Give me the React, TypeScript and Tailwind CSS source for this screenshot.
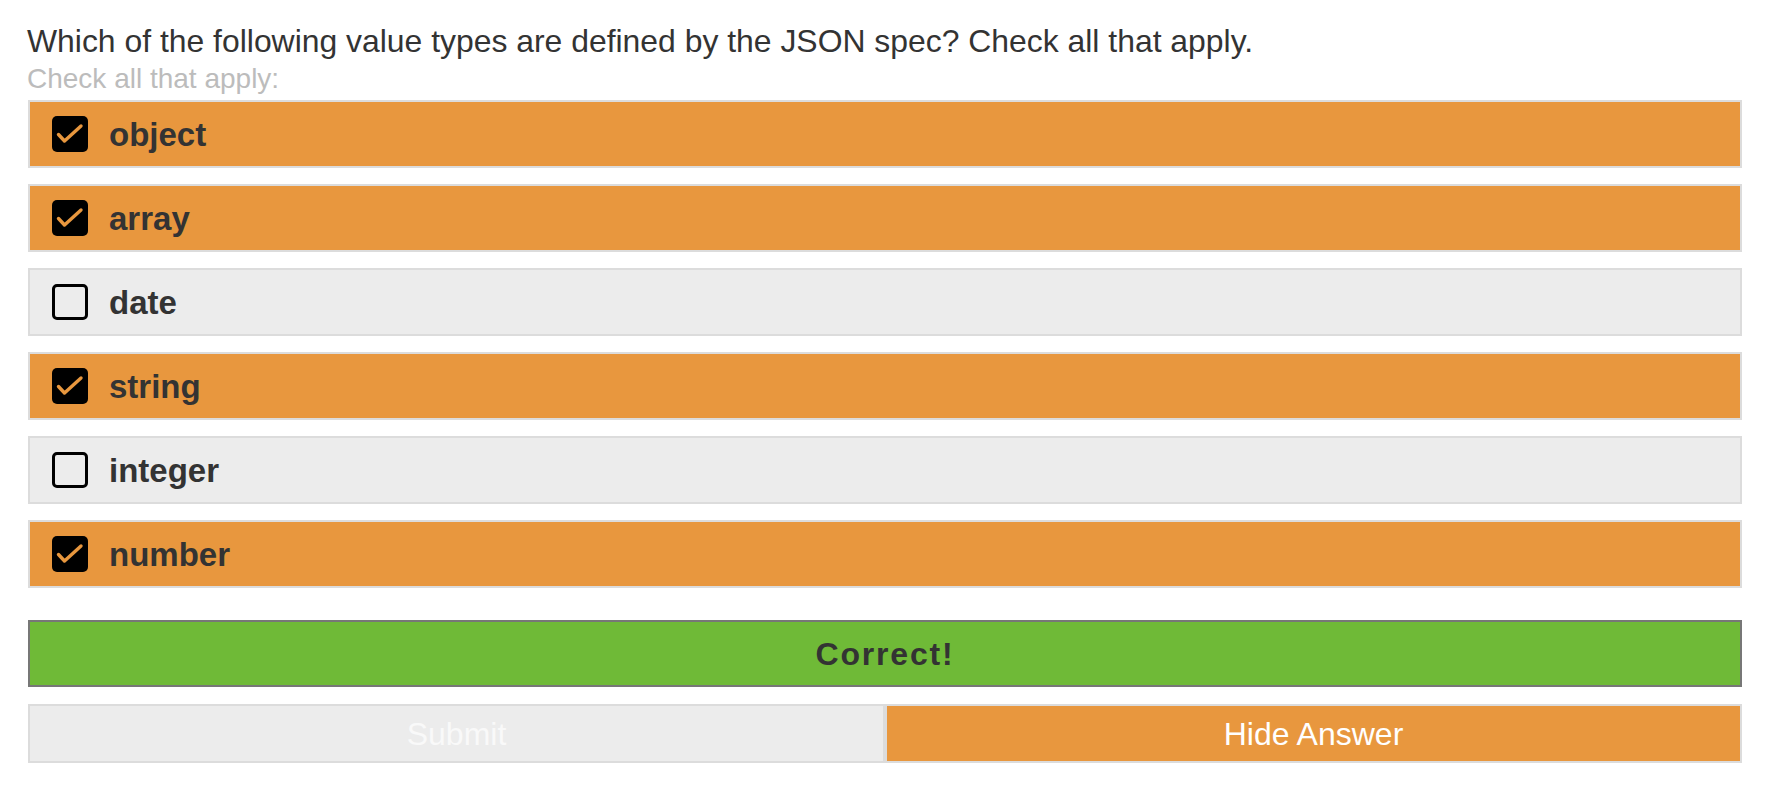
import React from "react";

const options = [
  { label: "object", checked: true },
  { label: "array", checked: true },
  { label: "date", checked: false },
  { label: "string", checked: true },
  { label: "integer", checked: false },
  { label: "number", checked: true },
];

function Box({ checked }: { checked: boolean }) {
  if (checked) {
    return (
      <div className="w-[36px] h-[36px] rounded-[5px] bg-black flex-none">
        <svg width="36" height="36" viewBox="0 0 36 36">
          <path
            d="M6.5 18.5 L12.5 25 L29 10"
            fill="none"
            stroke="#e8973e"
            strokeWidth="3.4"
            strokeLinecap="round"
            strokeLinejoin="round"
          />
        </svg>
      </div>
    );
  }
  return <div className="w-[36px] h-[36px] rounded-[5px] border-[3px] border-black flex-none" />;
}

export default function App() {
  return (
    <div
      className="bg-white w-[1792px] min-h-[792px] pt-[23px]"
      style={{ fontFamily: '"Liberation Sans", Arial, Helvetica, sans-serif' }}
    >
      <div className="ml-[28px] mr-[50px]">
        <div className="-ml-px text-[31.9px] leading-[36px] text-[#333]">
          Which of the following value types are defined by the JSON spec? Check all that apply.
        </div>
        <div className="-ml-px mt-[4px] text-[28px] leading-[32px] text-[#bcbcbc]">Check all that apply:</div>
        <div className="mt-[5px] flex flex-col gap-[16px]">
          {options.map((o) => (
            <div
              key={o.label}
              className={`h-[68px] border-2 border-[#dcdcdc] flex items-center pl-[22px] gap-[21px] ${
                o.checked ? "bg-[#e8973e]" : "bg-[#ececec]"
              }`}
            >
              <Box checked={o.checked} />
              <span className="text-[33px] font-bold text-[#333] leading-none">{o.label}</span>
            </div>
          ))}
        </div>
        <div className="mt-[32px] h-[67px] border-2 border-[#777] bg-[#6fba37] flex items-center justify-center">
          <span className="text-[32px] font-bold text-[#333] tracking-[1.8px]">Correct!</span>
        </div>
        <div className="mt-[17px] grid grid-cols-2 h-[59px]">
          <div className="border-2 border-[#dcdcdc] bg-[#ececec] flex items-center justify-center text-[32px] text-[#f9f9f9]">
            Submit
          </div>
          <div className="border-2 border-[#dcdcdc] bg-[#e8973e] flex items-center justify-center text-[32px] text-white">
            Hide Answer
          </div>
        </div>
      </div>
    </div>
  );
}
